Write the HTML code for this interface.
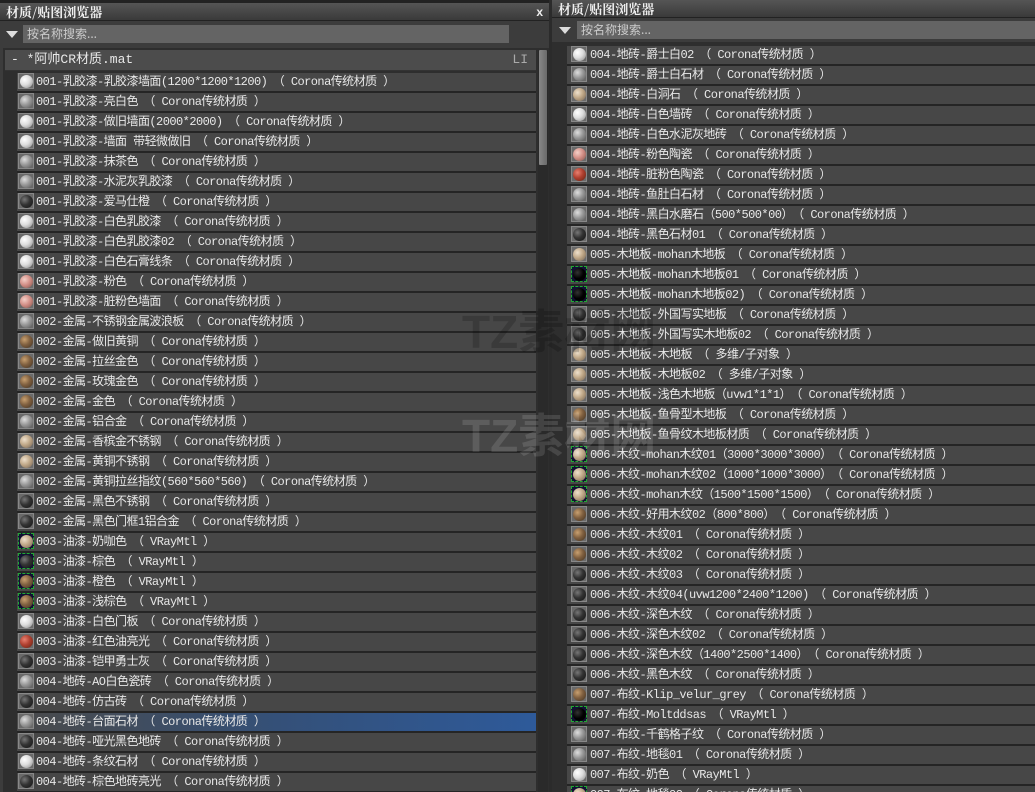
<!DOCTYPE html>
<html><head><meta charset="utf-8">
<style>
*{margin:0;padding:0;box-sizing:border-box}
body{width:1035px;height:792px;background:#2b2b2b;overflow:hidden;position:relative;font-family:"Liberation Mono","Noto Sans CJK SC",monospace;font-size:12px;color:#e8e8e8}
.panel{position:absolute;top:0;background:#3c3c3c;overflow:hidden}
.title{position:absolute;left:0;right:0;height:18px;background:linear-gradient(#555,#3a3a3a);font-family:"Noto Serif CJK SC","Noto Sans CJK SC",serif;font-weight:bold;font-size:13px;color:#eee;line-height:18px;padding-left:6px;border-bottom:1px solid #222}
.search{position:absolute;height:18px;background:#646464;color:#ccc;font-family:"Noto Sans CJK SC",sans-serif;font-size:12px;line-height:18px;padding-left:4px}
.tri{position:absolute;width:0;height:0;border-left:6px solid transparent;border-right:6px solid transparent;border-top:7px solid #ddd}
.list{position:absolute}
.row{height:20px;background:#474747;border-bottom:2px solid #252525;position:relative;white-space:nowrap;line-height:18px;letter-spacing:-0.55px}
.row span{position:absolute;top:0}
.ic{position:absolute;top:1px;width:16px;height:16px;background:#6a6a6a;border:1px solid #888}
.ic i{position:absolute;left:1px;top:1px;width:13px;height:13px;border-radius:50%}
.w i{background:radial-gradient(circle at 35% 35%,#fff,#ddd 45%,#888)}
.g i{background:radial-gradient(circle at 35% 35%,#ddd,#999 45%,#555)}
.d i{background:radial-gradient(circle at 35% 35%,#777,#333 45%,#111)}
.k i{background:radial-gradient(circle at 35% 35%,#333,#000 50%)}
.p i{background:radial-gradient(circle at 35% 35%,#f4d0c8,#d49088 45%,#805048)}
.r i{background:radial-gradient(circle at 35% 35%,#e88070,#b04030 45%,#602010)}
.b i{background:radial-gradient(circle at 35% 35%,#c8a070,#806040 45%,#403020)}
.t i{background:radial-gradient(circle at 35% 35%,#eee0cc,#c0a888 45%,#706050)}
.v{border:1px dashed #2a3;background:#113}
.sel{background:linear-gradient(90deg,#4a4a4a,#345078 50%,#2e5a9a)}
.hdr{height:21px;background:#4c4c4c;border-bottom:1px solid #333;line-height:20px;padding-left:6px;position:relative;font-size:13px}
.wm{position:absolute;color:rgba(0,0,0,0.18);font-family:"Liberation Sans","Noto Sans CJK SC",sans-serif;font-weight:bold;font-size:46px;white-space:nowrap}
</style></head><body>

<div class="panel" style="left:0;width:549px;height:792px">
  <div style="position:absolute;left:0;top:0;width:549px;height:3px;background:#222"></div>
  <div class="title" style="top:3px">材质/贴图浏览器<span style="position:absolute;right:6px;font-family:'Liberation Sans';font-size:12px">x</span></div>
  <div class="tri" style="left:6px;top:31px"></div>
  <div class="search" style="left:23px;top:25px;width:486px">按名称搜索...</div>
  <div style="position:absolute;left:3px;top:48px;width:546px;height:744px;background:#2e2e2e"></div>
  <div style="position:absolute;left:538px;top:50px;width:10px;height:742px;background:#2a2a2a"></div>
  <div style="position:absolute;left:539px;top:50px;width:8px;height:115px;background:linear-gradient(90deg,#888,#6a6a6a);border-radius:1px"></div>
  <div class="list" style="left:5px;top:50px;width:531px">
    <div class="hdr">- *阿帅CR材质.mat<span style="position:absolute;right:8px;color:#aaa">LI</span></div>
  </div>
  <div class="list" style="left:17px;top:73px;width:519px">
<div class="row"><span class="ic w" style="left:1px"><i></i></span><span style="left:19px">001-乳胶漆-乳胶漆墙面(1200*1200*1200)　（ Corona传统材质 ）</span></div>
<div class="row"><span class="ic g" style="left:1px"><i></i></span><span style="left:19px">001-乳胶漆-亮白色　（ Corona传统材质 ）</span></div>
<div class="row"><span class="ic w" style="left:1px"><i></i></span><span style="left:19px">001-乳胶漆-做旧墙面(2000*2000)　（ Corona传统材质 ）</span></div>
<div class="row"><span class="ic w" style="left:1px"><i></i></span><span style="left:19px">001-乳胶漆-墙面 带轻微做旧　（ Corona传统材质 ）</span></div>
<div class="row"><span class="ic g" style="left:1px"><i></i></span><span style="left:19px">001-乳胶漆-抹茶色　（ Corona传统材质 ）</span></div>
<div class="row"><span class="ic g" style="left:1px"><i></i></span><span style="left:19px">001-乳胶漆-水泥灰乳胶漆　（ Corona传统材质 ）</span></div>
<div class="row"><span class="ic d" style="left:1px"><i></i></span><span style="left:19px">001-乳胶漆-爱马仕橙　（ Corona传统材质 ）</span></div>
<div class="row"><span class="ic w" style="left:1px"><i></i></span><span style="left:19px">001-乳胶漆-白色乳胶漆　（ Corona传统材质 ）</span></div>
<div class="row"><span class="ic w" style="left:1px"><i></i></span><span style="left:19px">001-乳胶漆-白色乳胶漆02　（ Corona传统材质 ）</span></div>
<div class="row"><span class="ic w" style="left:1px"><i></i></span><span style="left:19px">001-乳胶漆-白色石膏线条　（ Corona传统材质 ）</span></div>
<div class="row"><span class="ic p" style="left:1px"><i></i></span><span style="left:19px">001-乳胶漆-粉色　（ Corona传统材质 ）</span></div>
<div class="row"><span class="ic p" style="left:1px"><i></i></span><span style="left:19px">001-乳胶漆-脏粉色墙面　（ Corona传统材质 ）</span></div>
<div class="row"><span class="ic g" style="left:1px"><i></i></span><span style="left:19px">002-金属-不锈钢金属波浪板　（ Corona传统材质 ）</span></div>
<div class="row"><span class="ic b" style="left:1px"><i></i></span><span style="left:19px">002-金属-做旧黄铜　（ Corona传统材质 ）</span></div>
<div class="row"><span class="ic b" style="left:1px"><i></i></span><span style="left:19px">002-金属-拉丝金色　（ Corona传统材质 ）</span></div>
<div class="row"><span class="ic b" style="left:1px"><i></i></span><span style="left:19px">002-金属-玫瑰金色　（ Corona传统材质 ）</span></div>
<div class="row"><span class="ic b" style="left:1px"><i></i></span><span style="left:19px">002-金属-金色　（ Corona传统材质 ）</span></div>
<div class="row"><span class="ic g" style="left:1px"><i></i></span><span style="left:19px">002-金属-铝合金　（ Corona传统材质 ）</span></div>
<div class="row"><span class="ic t" style="left:1px"><i></i></span><span style="left:19px">002-金属-香槟金不锈钢　（ Corona传统材质 ）</span></div>
<div class="row"><span class="ic t" style="left:1px"><i></i></span><span style="left:19px">002-金属-黄铜不锈钢　（ Corona传统材质 ）</span></div>
<div class="row"><span class="ic g" style="left:1px"><i></i></span><span style="left:19px">002-金属-黄铜拉丝指纹(560*560*560)　（ Corona传统材质 ）</span></div>
<div class="row"><span class="ic d" style="left:1px"><i></i></span><span style="left:19px">002-金属-黑色不锈钢　（ Corona传统材质 ）</span></div>
<div class="row"><span class="ic d" style="left:1px"><i></i></span><span style="left:19px">002-金属-黑色门框1铝合金　（ Corona传统材质 ）</span></div>
<div class="row"><span class="ic t v" style="left:1px"><i></i></span><span style="left:19px">003-油漆-奶咖色　（ VRayMtl ）</span></div>
<div class="row"><span class="ic d v" style="left:1px"><i></i></span><span style="left:19px">003-油漆-棕色　（ VRayMtl ）</span></div>
<div class="row"><span class="ic b v" style="left:1px"><i></i></span><span style="left:19px">003-油漆-橙色　（ VRayMtl ）</span></div>
<div class="row"><span class="ic b v" style="left:1px"><i></i></span><span style="left:19px">003-油漆-浅棕色　（ VRayMtl ）</span></div>
<div class="row"><span class="ic w" style="left:1px"><i></i></span><span style="left:19px">003-油漆-白色门板　（ Corona传统材质 ）</span></div>
<div class="row"><span class="ic r" style="left:1px"><i></i></span><span style="left:19px">003-油漆-红色油亮光　（ Corona传统材质 ）</span></div>
<div class="row"><span class="ic d" style="left:1px"><i></i></span><span style="left:19px">003-油漆-铠甲勇士灰　（ Corona传统材质 ）</span></div>
<div class="row"><span class="ic g" style="left:1px"><i></i></span><span style="left:19px">004-地砖-AO白色瓷砖　（ Corona传统材质 ）</span></div>
<div class="row"><span class="ic d" style="left:1px"><i></i></span><span style="left:19px">004-地砖-仿古砖　（ Corona传统材质 ）</span></div>
<div class="row sel"><span class="ic g" style="left:1px"><i></i></span><span style="left:19px">004-地砖-台面石材　（ Corona传统材质 ）</span></div>
<div class="row"><span class="ic d" style="left:1px"><i></i></span><span style="left:19px">004-地砖-哑光黑色地砖　（ Corona传统材质 ）</span></div>
<div class="row"><span class="ic w" style="left:1px"><i></i></span><span style="left:19px">004-地砖-条纹石材　（ Corona传统材质 ）</span></div>
<div class="row"><span class="ic d" style="left:1px"><i></i></span><span style="left:19px">004-地砖-棕色地砖亮光　（ Corona传统材质 ）</span></div>
  </div>
</div>

<div class="panel" style="left:552px;width:483px;height:792px">
  <div class="title" style="top:0">材质/贴图浏览器</div>
  <div class="tri" style="left:7px;top:27px"></div>
  <div class="search" style="left:25px;top:21px;width:458px">按名称搜索...</div>
  <div style="position:absolute;left:0;top:42px;width:483px;height:750px;background:#2e2e2e"></div>
  <div class="list" style="left:15px;top:46px;width:468px">
<div class="row"><span class="ic w" style="left:4px"><i></i></span><span style="left:23px">004-地砖-爵士白02　（ Corona传统材质 ）</span></div>
<div class="row"><span class="ic g" style="left:4px"><i></i></span><span style="left:23px">004-地砖-爵士白石材　（ Corona传统材质 ）</span></div>
<div class="row"><span class="ic t" style="left:4px"><i></i></span><span style="left:23px">004-地砖-白洞石　（ Corona传统材质 ）</span></div>
<div class="row"><span class="ic w" style="left:4px"><i></i></span><span style="left:23px">004-地砖-白色墙砖　（ Corona传统材质 ）</span></div>
<div class="row"><span class="ic g" style="left:4px"><i></i></span><span style="left:23px">004-地砖-白色水泥灰地砖　（ Corona传统材质 ）</span></div>
<div class="row"><span class="ic p" style="left:4px"><i></i></span><span style="left:23px">004-地砖-粉色陶瓷　（ Corona传统材质 ）</span></div>
<div class="row"><span class="ic r" style="left:4px"><i></i></span><span style="left:23px">004-地砖-脏粉色陶瓷　（ Corona传统材质 ）</span></div>
<div class="row"><span class="ic g" style="left:4px"><i></i></span><span style="left:23px">004-地砖-鱼肚白石材　（ Corona传统材质 ）</span></div>
<div class="row"><span class="ic g" style="left:4px"><i></i></span><span style="left:23px">004-地砖-黑白水磨石（500*500*00）　（ Corona传统材质 ）</span></div>
<div class="row"><span class="ic d" style="left:4px"><i></i></span><span style="left:23px">004-地砖-黑色石材01　（ Corona传统材质 ）</span></div>
<div class="row"><span class="ic t" style="left:4px"><i></i></span><span style="left:23px">005-木地板-mohan木地板　（ Corona传统材质 ）</span></div>
<div class="row"><span class="ic k v" style="left:4px"><i></i></span><span style="left:23px">005-木地板-mohan木地板01　（ Corona传统材质 ）</span></div>
<div class="row"><span class="ic k v" style="left:4px"><i></i></span><span style="left:23px">005-木地板-mohan木地板02)　（ Corona传统材质 ）</span></div>
<div class="row"><span class="ic d" style="left:4px"><i></i></span><span style="left:23px">005-木地板-外国写实地板　（ Corona传统材质 ）</span></div>
<div class="row"><span class="ic d" style="left:4px"><i></i></span><span style="left:23px">005-木地板-外国写实木地板02　（ Corona传统材质 ）</span></div>
<div class="row"><span class="ic t" style="left:4px"><i></i></span><span style="left:23px">005-木地板-木地板　（ 多维/子对象 ）</span></div>
<div class="row"><span class="ic t" style="left:4px"><i></i></span><span style="left:23px">005-木地板-木地板02　（ 多维/子对象 ）</span></div>
<div class="row"><span class="ic t" style="left:4px"><i></i></span><span style="left:23px">005-木地板-浅色木地板（uvw1*1*1）　（ Corona传统材质 ）</span></div>
<div class="row"><span class="ic b" style="left:4px"><i></i></span><span style="left:23px">005-木地板-鱼骨型木地板　（ Corona传统材质 ）</span></div>
<div class="row"><span class="ic t" style="left:4px"><i></i></span><span style="left:23px">005-木地板-鱼骨纹木地板材质　（ Corona传统材质 ）</span></div>
<div class="row"><span class="ic t v" style="left:4px"><i></i></span><span style="left:23px">006-木纹-mohan木纹01（3000*3000*3000）　（ Corona传统材质 ）</span></div>
<div class="row"><span class="ic t v" style="left:4px"><i></i></span><span style="left:23px">006-木纹-mohan木纹02（1000*1000*3000）　（ Corona传统材质 ）</span></div>
<div class="row"><span class="ic t v" style="left:4px"><i></i></span><span style="left:23px">006-木纹-mohan木纹（1500*1500*1500）　（ Corona传统材质 ）</span></div>
<div class="row"><span class="ic b" style="left:4px"><i></i></span><span style="left:23px">006-木纹-好用木纹02（800*800）　（ Corona传统材质 ）</span></div>
<div class="row"><span class="ic b" style="left:4px"><i></i></span><span style="left:23px">006-木纹-木纹01　（ Corona传统材质 ）</span></div>
<div class="row"><span class="ic b" style="left:4px"><i></i></span><span style="left:23px">006-木纹-木纹02　（ Corona传统材质 ）</span></div>
<div class="row"><span class="ic d" style="left:4px"><i></i></span><span style="left:23px">006-木纹-木纹03　（ Corona传统材质 ）</span></div>
<div class="row"><span class="ic d" style="left:4px"><i></i></span><span style="left:23px">006-木纹-木纹04(uvw1200*2400*1200)　（ Corona传统材质 ）</span></div>
<div class="row"><span class="ic d" style="left:4px"><i></i></span><span style="left:23px">006-木纹-深色木纹　（ Corona传统材质 ）</span></div>
<div class="row"><span class="ic d" style="left:4px"><i></i></span><span style="left:23px">006-木纹-深色木纹02　（ Corona传统材质 ）</span></div>
<div class="row"><span class="ic d" style="left:4px"><i></i></span><span style="left:23px">006-木纹-深色木纹（1400*2500*1400）　（ Corona传统材质 ）</span></div>
<div class="row"><span class="ic d" style="left:4px"><i></i></span><span style="left:23px">006-木纹-黑色木纹　（ Corona传统材质 ）</span></div>
<div class="row"><span class="ic b" style="left:4px"><i></i></span><span style="left:23px">007-布纹-Klip_velur_grey　（ Corona传统材质 ）</span></div>
<div class="row"><span class="ic k v" style="left:4px"><i></i></span><span style="left:23px">007-布纹-Moltddsas　（ VRayMtl ）</span></div>
<div class="row"><span class="ic g" style="left:4px"><i></i></span><span style="left:23px">007-布纹-千鹤格子纹　（ Corona传统材质 ）</span></div>
<div class="row"><span class="ic g" style="left:4px"><i></i></span><span style="left:23px">007-布纹-地毯01　（ Corona传统材质 ）</span></div>
<div class="row"><span class="ic w" style="left:4px"><i></i></span><span style="left:23px">007-布纹-奶色　（ VRayMtl ）</span></div>
<div class="row"><span class="ic t v" style="left:4px"><i></i></span><span style="left:23px">007-布纹-地毯02　（ Corona传统材质 ）</span></div>
  </div>
</div>

<div class="wm" style="left:462px;top:296px">TZ素材网</div>
<div class="wm" style="left:462px;top:400px;color:rgba(255,255,255,0.12)">TZ素材网</div>
</body></html>
